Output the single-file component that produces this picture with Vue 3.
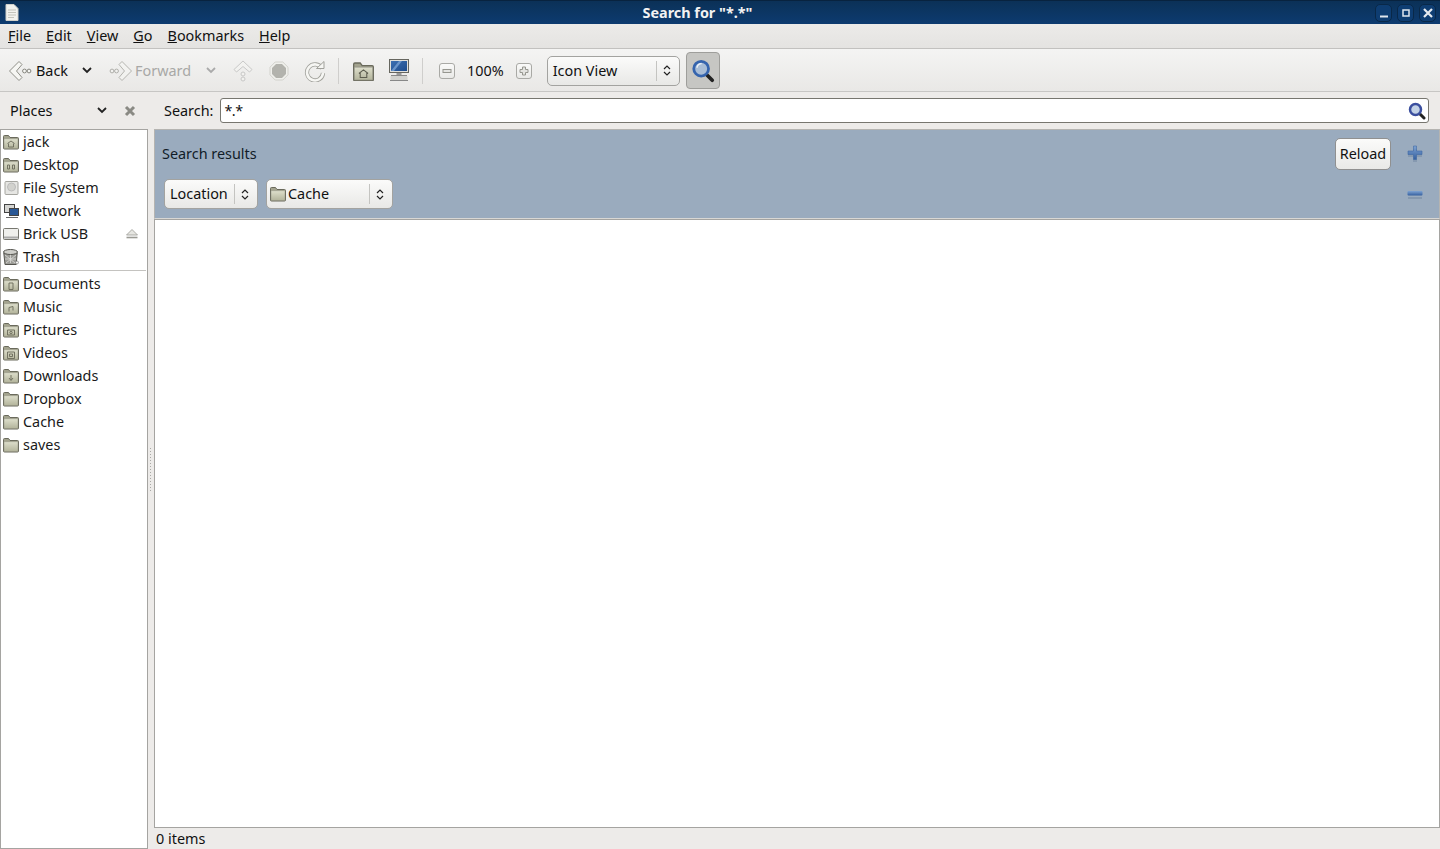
<template>
  <div class="window">
    <svg class="defs" width="0" height="0">
      <defs>
        <linearGradient id="fold" x1="0" y1="0" x2="0" y2="1">
          <stop offset="0" stop-color="#dedfcc" />
          <stop offset="1" stop-color="#b3b49b" />
        </linearGradient>
        <linearGradient id="glossy" x1="0" y1="0" x2="0" y2="1">
          <stop offset="0" stop-color="#7ea3d3" />
          <stop offset="1" stop-color="#345f9f" />
        </linearGradient>
        <linearGradient id="screen" x1="0" y1="0" x2="1" y2="1">
          <stop offset="0" stop-color="#3d70b2" />
          <stop offset="1" stop-color="#1e4c8c" />
        </linearGradient>
        <symbol id="folder" viewBox="0 0 16 16">
          <path d="M.5 2.500Q.5 1.500 1.500 1.500h4l1.500 2h7.500q1 0 1 1v9.500q0 1-1 1H1.500q-1 0-1-1z" fill="#a3a38e" stroke="#6a6a5c" />
          <path d="M1 4.700h14v9.800H1z" fill="url(#fold)" stroke="#85857a" stroke-width=".4" />
        </symbol>
        <symbol id="arrow" viewBox="0 0 24 24">
          <path d="M1.500 12 11 2.500l3 3L8.500 12l5.500 6.500-3 3z" fill="#f6f6f3" stroke="#8f8f88" />
          <circle cx="16.500" cy="12" r="1.900" fill="#f6f6f3" stroke="#85857e" />
          <circle cx="21" cy="12" r="1.900" fill="#f6f6f3" stroke="#85857e" />
        </symbol>
      </defs>
    </svg>

    <header class="titlebar">
      <svg class="doc" width="14" height="17" viewBox="0 0 14 17">
        <path d="M1 .5h8l4 4v12H1z" fill="#f2f2ee" stroke="#d0d0ca" />
        <path d="M3 6h8M3 8.500h8M3 11h8M3 13.500h6" stroke="#c4c4bc" />
      </svg>
      <div class="title">Search for "*.*"</div>
      <div class="wm-buttons">
        <button class="wm-btn">
          <svg width="10" height="10" viewBox="0 0 10 10"><path d="M1 8.500h8" stroke="#dfe6ee" stroke-width="2" /></svg>
        </button>
        <button class="wm-btn">
          <svg width="10" height="10" viewBox="0 0 10 10"><rect x="2" y="2" width="6" height="6" fill="none" stroke="#dfe6ee" stroke-width="1.500" /></svg>
        </button>
        <button class="wm-btn">
          <svg width="10" height="10" viewBox="0 0 10 10"><path d="M1 1l8 8M9 1l-8 8" stroke="#e6ebf1" stroke-width="2.200" /></svg>
        </button>
      </div>
    </header>

    <nav class="menubar">
      <span v-for="m in menus" :key="m"><u>{{ m[0] }}</u>{{ m.slice(1) }}</span>
    </nav>

    <div class="toolbar">
      <svg class="nav-icon" width="24" height="24"><use href="#arrow" /></svg>
      <span class="back-label">Back</span>
      <svg class="back-chev" width="10" height="7" viewBox="0 0 10 7"><path d="M1 1l4 4 4-4" fill="none" stroke="#222" stroke-width="1.800" /></svg>

      <svg class="nav-icon forward-icon" width="24" height="24" viewBox="0 0 24 24">
        <g transform="matrix(-1 0 0 1 24 0)" opacity=".6"><use href="#arrow" width="24" height="24" /></g>
      </svg>
      <span class="off forward-label">Forward</span>
      <svg class="fwd-chev" width="10" height="7" viewBox="0 0 10 7"><path d="M1 1l4 4 4-4" fill="none" stroke="#aaa" stroke-width="1.800" /></svg>

      <svg class="up-icon" width="20" height="22" viewBox="0 0 20 22" opacity=".55">
        <path d="M10 1 1 9.500l2.500 2.500L10 6.500l6.500 5.500 2.500-2.500z" fill="#f6f6f3" stroke="#aaa" />
        <circle cx="10" cy="14" r="2" fill="#f6f6f3" stroke="#aaa" />
        <circle cx="10" cy="19" r="2" fill="#f6f6f3" stroke="#aaa" />
      </svg>
      <svg class="stop-icon" width="20" height="20" viewBox="0 0 20 20">
        <path d="M6.200 1h7.600L19 6.200v7.600L13.800 19H6.200L1 13.800V6.200z" fill="#f0f0ec" stroke="#d2d2cc" />
        <path d="M7 3h6L17 7v6l-4 4H7l-4-4V7z" fill="#b3b3ad" />
      </svg>
      <svg class="reload-icon" width="22" height="22" viewBox="0 0 22 22">
        <path d="M18 8.500A8 8 0 1 0 19 13" fill="none" stroke="#a0a09a" stroke-width="4.200" />
        <path d="M18 8.500A8 8 0 1 0 19 13" fill="none" stroke="#f6f6f3" stroke-width="2.600" />
        <path d="M12.500 8.500h7.500V1.500z" fill="#f6f6f3" stroke="#a0a09a" />
      </svg>
      <span class="tool-sep first-sep"></span>

      <svg class="home-icon" width="21" height="20" viewBox="0 0 16 15.200">
        <use href="#folder" width="16" height="16" />
        <path d="M4.500 9.500 8 6.800l3.500 2.700M5.500 9v3.500h5V9" fill="none" stroke="#5d5d4f" stroke-width=".8" />
      </svg>
      <svg class="computer-icon" width="22" height="24" viewBox="0 0 22 24">
        <rect x="1.500" y=".5" width="19" height="13" fill="#e0e0dc" stroke="#66665f" />
        <rect x="3" y="2" width="16" height="10" fill="url(#screen)" />
        <path d="M3 12 11 2h3l-8 10z" fill="#6b95ca" />
        <path d="M8.500 14h5v2h-5z" fill="#999" />
        <path d="M3 16.500h16M2 21.500h18" stroke="#888" />
        <path d="M2.500 19h17" stroke="#d2d2ce" stroke-width="4" />
      </svg>
      <span class="tool-sep second-sep"></span>

      <button class="zoom-btn minus-btn">
        <svg width="10" height="10" viewBox="0 0 10 10"><rect x="1" y="3.500" width="8" height="3" fill="#e4e4e1" stroke="#96968f" /></svg>
      </button>
      <span class="zoom-text">100%</span>
      <button class="zoom-btn plus-btn">
        <svg width="10" height="10" viewBox="0 0 10 10"><path d="M3.500 1h3v2.500H9v3H6.500V9h-3V6.500H1v-3h2.500z" fill="#e4e4e1" stroke="#96968f" /></svg>
      </button>

      <div class="combo view-combo">
        <span class="combo-text">Icon View</span>
        <span class="combo-arrows">
          <svg width="8" height="13" viewBox="0 0 8 13"><path d="M1 5l3-3 3 3M1 8l3 3 3-3" fill="none" stroke="#222" stroke-width="1.200" /></svg>
        </span>
      </div>

      <button class="search-toggle">
        <svg width="24" height="25" viewBox="0 0 26 26">
          <path d="M16.500 17 23 23.500" stroke="#222" stroke-width="4" stroke-linecap="round" />
          <circle cx="11" cy="11" r="8" fill="#a9bdd6" stroke="#3564ae" stroke-width="3" />
          <path d="M6.500 10a5 5 0 0 1 5-4.500" fill="none" stroke="#eef3f9" stroke-width="1.500" />
        </svg>
      </button>
    </div>

    <div class="main">
      <div class="places-head">
        <span class="places-label">Places</span>
        <svg class="places-chev" width="10" height="7" viewBox="0 0 10 7"><path d="M1 1l4 4 4-4" fill="none" stroke="#222" stroke-width="1.800" /></svg>
        <svg class="places-close" width="12" height="12" viewBox="0 0 12 12"><path d="M2 2l8 8M10 2l-8 8" stroke="#8a8a84" stroke-width="3" /></svg>
      </div>

      <div class="search-row">
        <label>Search:</label>
        <div class="search-box">
          <span class="search-value">*.*</span>
          <svg width="18" height="18" viewBox="0 0 18 18">
            <path d="M11 11l5 5" stroke="#222" stroke-width="3" stroke-linecap="round" />
            <circle cx="7.500" cy="7.500" r="5.500" fill="#c3d2e6" stroke="#3b4f9f" stroke-width="2.500" />
          </svg>
        </div>
      </div>

      <aside class="sidebar">
        <template v-for="(group, i) in places" :key="i">
          <div v-if="i" class="side-sep"></div>
          <div v-for="p in group" :key="p.name" class="place">
            <svg v-if="p.icon === 'disk'" class="place-icon" width="16" height="16" viewBox="0 0 16 16">
              <rect x="2" y="1.500" width="13" height="13" rx="1" fill="#e6e6e3" stroke="#a5a5a0" />
              <circle cx="8.500" cy="7" r="4" fill="#d2d2ce" stroke="#bbb" />
            </svg>
            <svg v-else-if="p.icon === 'network'" class="place-icon" width="16" height="16" viewBox="0 0 16 16">
              <rect x="1.500" y="1.500" width="10" height="8" fill="#d5d5d2" stroke="#444" />
              <rect x="6.500" y="5.500" width="9" height="7" fill="#2a5896" stroke="#444" />
              <path d="M3 14.500h12" stroke="#666" />
            </svg>
            <svg v-else-if="p.icon === 'usb'" class="place-icon" width="16" height="16" viewBox="0 0 16 16">
              <rect x=".5" y="2.500" width="15" height="11" rx="1" fill="#efefec" stroke="#77776f" />
              <path d="M1 11.500h14" stroke="#aaa" stroke-width="2" />
            </svg>
            <svg v-else-if="p.icon === 'trash'" class="place-icon" width="16" height="16" viewBox="0 0 16 16">
              <path d="M.8 4h13.400l-1 11.500H2z" fill="#9c9c97" stroke="#55554f" />
              <path d="M2 6l10 8M13 6 3 14M7.500 5v9M2 10h11" stroke="#dcdcd8" stroke-width=".8" />
              <ellipse cx="7.500" cy="3" rx="7" ry="2.500" fill="#cfcfca" stroke="#55554f" />
              <circle cx="14" cy="13.500" r="1.500" fill="#f4f4f2" stroke="#777" stroke-width=".6" />
            </svg>
            <svg v-else class="place-icon" width="16" height="16" viewBox="0 0 16 16">
              <use href="#folder" width="16" height="16" />
              <path v-if="p.mark" :d="p.mark" fill="none" stroke="#6a6a5a" stroke-width=".9" />
            </svg>
            <span class="place-name">{{ p.name }}</span>
            <svg v-if="p.eject" class="eject" width="12" height="10" viewBox="0 0 12 10">
              <path d="M6 .5 11.500 6H.5z" fill="#e6e6e2" stroke="#9a9a94" stroke-width=".8" />
              <path d="M.5 8.500h11" stroke="#9a9a94" stroke-width="1.600" />
            </svg>
          </div>
        </template>
      </aside>

      <div class="handle"></div>

      <section class="content">
        <div class="banner">
          <div class="banner-row">
            <span class="banner-title">Search results</span>
            <button class="reload">Reload</button>
            <svg class="pm" width="16" height="18" viewBox="0 0 16 18">
              <path d="M6 3h4v5h5v3h-5v5H6v-5H1V8h5z" fill="#8699b0" transform="translate(0 1)" />
              <path d="M6.500 1h3v5h5.500v3.500H9.500v5h-3v-5H1V6h5.500z" fill="url(#glossy)" stroke="#3f6aa5" stroke-width=".6" />
            </svg>
          </div>
          <div class="banner-row criteria">
            <div class="combo crit-type">
              <span class="combo-text">Location</span>
              <span class="combo-arrows">
                <svg width="8" height="13" viewBox="0 0 8 13"><path d="M1 5l3-3 3 3M1 8l3 3 3-3" fill="none" stroke="#222" stroke-width="1.200" /></svg>
              </span>
            </div>
            <div class="combo crit-value">
              <svg class="combo-folder" width="17" height="17"><use href="#folder" width="16" height="16" /></svg>
              <span class="combo-text tight">Cache</span>
              <span class="combo-arrows">
                <svg width="8" height="13" viewBox="0 0 8 13"><path d="M1 5l3-3 3 3M1 8l3 3 3-3" fill="none" stroke="#222" stroke-width="1.200" /></svg>
              </span>
            </div>
            <svg class="pm minus" width="16" height="12" viewBox="0 0 16 12">
              <rect x=".5" y="3" width="15" height="4.500" rx="1" fill="url(#glossy)" />
              <rect x="1" y="9" width="14" height="2" fill="#8598ae" />
            </svg>
          </div>
        </div>
        <div class="view"></div>
        <footer class="status">0 items</footer>
      </section>
    </div>
  </div>
</template>

<script setup>
const menus = ["File", "Edit", "View", "Go", "Bookmarks", "Help"];

const places = [
  [
    { name: "jack", mark: "M4.500 9.500 8 7l3.500 2.500M5.500 9.500v3.500h5V9.500" },
    { name: "Desktop", mark: "M4.500 8h2v4h-2zM9.500 8h2v4h-2z" },
    { name: "File System", icon: "disk" },
    { name: "Network", icon: "network" },
    { name: "Brick USB", icon: "usb", eject: true },
    { name: "Trash", icon: "trash" },
  ],
  [
    { name: "Documents", mark: "M6 7h4v6.500H6z" },
    { name: "Music", mark: "M6 12.500V8.500l4-1v4" },
    { name: "Pictures", mark: "M4.500 8h7v5h-7zM9.200 10.500a1.200 1.200 0 1 1-2.400 0 1.200 1.200 0 1 1 2.400 0" },
    { name: "Videos", mark: "M4.500 7h7v6.500h-7zM6.500 9h3v2.500h-3z" },
    { name: "Downloads", mark: "M8 7v5M6 10l2 2.500 2-2.500" },
    { name: "Dropbox" },
    { name: "Cache" },
    { name: "saves" },
  ],
];
</script>

<style>
html,
body {
  margin: 0;
  overflow: hidden;
}
</style>

<style scoped>
.window {
  position: relative;
  display: flex;
  flex-direction: column;
  height: 849px;
  background: #edebe9;
  color: #111;
  font-family: "Noto Sans", "Open Sans", sans-serif;
  font-size: 14.4px;
  line-height: 20px;
  overflow: hidden;
}

.defs {
  position: absolute;
}

.titlebar {
  display: flex;
  align-items: center;
  height: 24px;
  flex: none;
  box-sizing: border-box;
  padding: 0 4px 0 5px;
  background: linear-gradient(#0b3157, #0d3b70);
  border-top: 1px solid #08233f;
}

.doc {
  flex: none;
}

.title {
  flex: 1;
  padding-left: 5px;
  text-align: center;
  color: #f2f2f2;
  font-weight: 700;
}

.wm-buttons {
  display: flex;
  gap: 5px;
  margin-left: 4px;
}

.wm-btn {
  display: flex;
  align-items: center;
  justify-content: center;
  width: 17px;
  height: 18px;
  padding: 0;
  border: 1px solid #092848;
  border-radius: 5px;
  background: #0e3d72;
}

.menubar {
  display: flex;
  align-items: center;
  gap: 15px;
  flex: none;
  height: 24px;
  padding-left: 8px;
  background: linear-gradient(#ecebe9, #e4e3e1);
  border-bottom: 1px solid #c2c1bf;
}

.toolbar {
  display: flex;
  align-items: center;
  flex: none;
  box-sizing: border-box;
  height: 43px;
  padding: 1px 0 0 8px;
  background: linear-gradient(#f4f4f3, #e9e8e6);
  border-bottom: 1px solid #c7c6c4;
}

.back-label {
  margin-left: 4px;
}

.off {
  color: #a8a8a6;
}

.nav-icon {
  flex: none;
}

.back-chev {
  margin-left: 14px;
}

.forward-icon {
  margin-left: 17px;
}

.forward-label {
  margin-left: 2px;
}

.fwd-chev {
  margin-left: 15px;
}

.up-icon {
  margin-left: 17px;
}

.stop-icon {
  margin-left: 16px;
}

.reload-icon {
  margin-left: 15px;
}

.tool-sep {
  width: 1px;
  height: 26px;
  background: #cfcecc;
}

.first-sep {
  margin-left: 12px;
}

.home-icon {
  margin-left: 14px;
}

.computer-icon {
  margin-left: 14px;
}

.second-sep {
  margin-left: 12px;
}

.zoom-btn {
  display: flex;
  align-items: center;
  justify-content: center;
  width: 16px;
  height: 16px;
  padding: 0;
  border: 1px solid #a9a9a5;
  border-radius: 3px;
  background: linear-gradient(#fafaf9, #e9e9e7);
}

.minus-btn {
  margin-left: 16px;
}

.zoom-text {
  margin-left: 12px;
}

.plus-btn {
  margin-left: 12px;
}

.combo {
  display: flex;
  align-items: center;
  box-sizing: border-box;
  height: 30px;
  border: 1px solid #a3a3a0;
  border-radius: 5px;
  background: linear-gradient(#fbfbfa, #e8e8e6);
}

.combo-text {
  flex: 1;
  padding-left: 5px;
}

.combo-text.tight {
  padding-left: 0;
}

.combo-arrows {
  display: flex;
  align-items: center;
  justify-content: center;
  flex: none;
  width: 20px;
  height: 20px;
  margin-right: 2px;
  border-left: 1px solid #c4c4c1;
}

.view-combo {
  width: 133px;
  margin-left: 15px;
}

.search-toggle {
  display: flex;
  align-items: center;
  justify-content: center;
  width: 34px;
  height: 37px;
  margin-left: 6px;
  padding: 0;
  border: 1px solid #9e9e9b;
  border-radius: 4px;
  background: #c6c6c3;
}

.main {
  display: grid;
  grid-template-columns: 148px 6px 1fr;
  grid-template-rows: 37px 1fr;
  flex: 1;
  min-height: 0;
}

.places-head {
  display: flex;
  align-items: center;
  padding-left: 10px;
}

.places-label {
  flex: 1;
}

.places-chev {
  margin-right: 17px;
}

.places-close {
  margin-right: 12px;
}

.search-row {
  grid-column: 2 / 4;
  display: flex;
  align-items: center;
  gap: 7px;
  padding: 0 11px 0 16px;
}

.search-box {
  display: flex;
  align-items: center;
  justify-content: space-between;
  flex: 1;
  box-sizing: border-box;
  height: 25px;
  padding: 0 2px 0 3px;
  border: 1px solid #77766f;
  border-radius: 3px;
  background: #fff;
}

.search-value {
  letter-spacing: -0.5px;
}

.sidebar {
  box-sizing: border-box;
  background: #fff;
  border: 1px solid #a5a4a1;
}

.place {
  display: flex;
  align-items: center;
  height: 23px;
  padding-left: 2px;
}

.place-icon {
  flex: none;
}

.place-name {
  flex: 1;
  margin-left: 4px;
  color: #1a1a1a;
}

.eject {
  margin-right: 9px;
}

.side-sep {
  height: 1px;
  margin: 2px 1px 1px 0;
  background: #c4c3c0;
}

.handle {
  grid-row: 2;
  grid-column: 2;
  align-self: start;
  height: 46px;
  margin: 318px 1px 0;
  background-image: radial-gradient(#a9a9a5 0.7px, transparent 0.8px);
  background-size: 3px 3px;
}

.content {
  display: flex;
  flex-direction: column;
  min-width: 0;
}

.banner {
  display: flex;
  flex-direction: column;
  box-sizing: border-box;
  flex: none;
  height: 90px;
  padding: 0 16px 0 7px;
  background: #9aabbe;
  border: 1px solid #b5b4b1;
  border-bottom-color: #d8d7d4;
}

.banner-row {
  display: flex;
  align-items: center;
  height: 47px;
}

.banner-title {
  flex: 1;
  color: #111c28;
}

.reload {
  box-sizing: border-box;
  width: 56px;
  height: 32px;
  padding: 0;
  border: 1px solid #909090;
  border-radius: 5px;
  background: linear-gradient(#fbfbfa, #e9e9e7);
  color: #111;
  font-family: inherit;
  font-size: inherit;
}

.pm {
  flex: none;
  margin-left: 16px;
}

.criteria {
  height: 34px;
  gap: 8px;
  padding-left: 2px;
}

.crit-type {
  width: 94px;
}

.crit-value {
  width: 127px;
  padding-left: 3px;
}

.combo-folder {
  flex: none;
  margin-right: 1px;
}

.minus {
  margin-left: auto;
}

.view {
  flex: 1;
  background: #fff;
  border: 1px solid #a5a4a1;
}

.status {
  flex: none;
  height: 21px;
  padding-left: 2px;
  line-height: 22px;
}
</style>
